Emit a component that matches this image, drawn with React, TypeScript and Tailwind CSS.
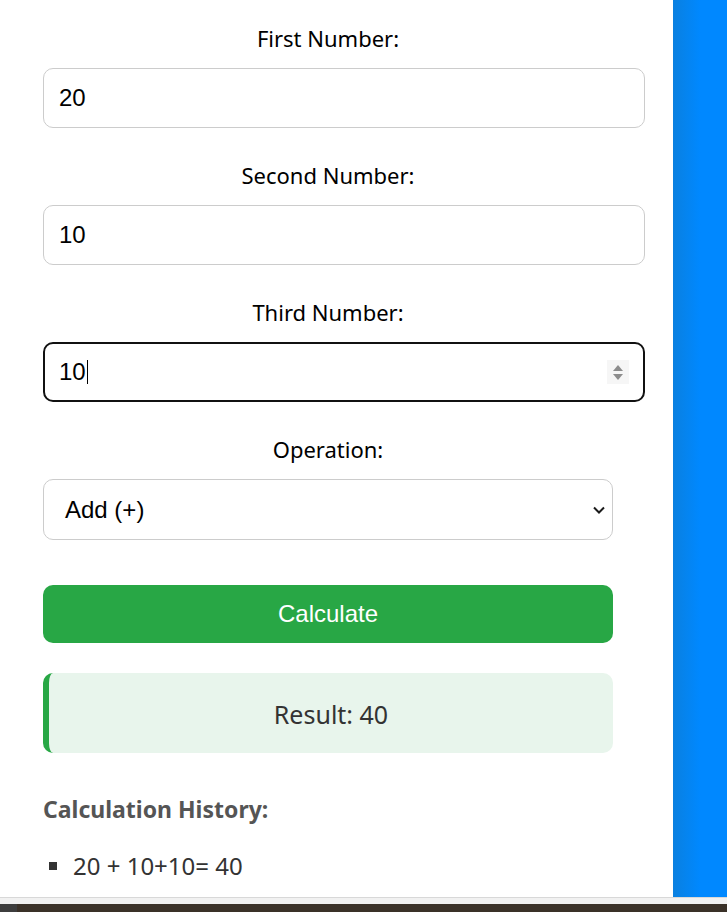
import React from "react";

const labelCls =
  "block text-center text-[22px] leading-[26px] h-[30px] mb-[13px] text-black [font-family:'Noto_Sans',sans-serif]";
const inputCls =
  "w-[602px] h-[60px] border border-[#cccccc] rounded-[10px] pl-[15px] flex items-center text-[24px] text-black [font-family:'Liberation_Sans',Arial,sans-serif] bg-white";

export default function App() {
  return (
    <div className="w-[727px] h-[912px] flex flex-col overflow-hidden bg-white">
      <div className="flex h-[897px]">
        <div className="w-[673px] bg-white">
          <div className="ml-[43px] w-[570px] pt-[25px]">
            <div className={labelCls}>First Number:</div>
            <div className={inputCls + " mb-[34px]"}>20</div>

            <div className={labelCls}>Second Number:</div>
            <div className={inputCls + " mb-[34px]"}>10</div>

            <div className={labelCls}>Third Number:</div>
            <div className="w-[602px] h-[60px] border-2 border-[#111111] rounded-[10px] pl-[14px] pr-[14px] flex items-center justify-between text-[24px] text-black [font-family:'Liberation_Sans',Arial,sans-serif] bg-white mb-[34px]">
              <div className="flex items-center">
                <span>10</span>
                <span className="w-px h-[24px] bg-black ml-[1px]" />
              </div>
              <div className="w-[22px] h-[24px] bg-[#f6f6f6] flex flex-col items-center justify-center gap-[3px]">
                <svg width="10" height="6" viewBox="0 0 10 6">
                  <polygon points="5,0 10,6 0,6" fill="#8d8d8d" />
                </svg>
                <svg width="10" height="6" viewBox="0 0 10 6">
                  <polygon points="0,0 10,0 5,6" fill="#8d8d8d" />
                </svg>
              </div>
            </div>

            <div className={labelCls}>Operation:</div>
            <div className="w-[570px] h-[61px] border border-[#cccccc] rounded-[10px] pl-[21px] pr-[6px] flex items-center justify-between text-[24px] text-black [font-family:'Liberation_Sans',Arial,sans-serif] bg-white mb-[45px]">
              <span>Add (+)</span>
              <svg width="14" height="10" viewBox="0 0 14 10">
                <polyline
                  points="2,2.5 7,7.5 12,2.5"
                  fill="none"
                  stroke="#1a1a1a"
                  strokeWidth="2"
                />
              </svg>
            </div>

            <div className="w-[570px] h-[58px] rounded-[10px] bg-[#28a745] text-white flex items-center justify-center text-[24px] [font-family:'Liberation_Sans',Arial,sans-serif] mb-[30px]">
              Calculate
            </div>

            <div className="w-[570px] h-[80px] rounded-[10px] bg-[#e8f5ec] border-l-[6px] border-[#28a745] flex items-center justify-center text-[25px] text-[#333333] [font-family:'Noto_Sans',sans-serif] pt-[3px]">
              Result: 40
            </div>

            <div className="mt-[41px] text-[23px] leading-[30px] font-bold text-[#555555] [font-family:'Noto_Sans',sans-serif]">
              Calculation History:
            </div>

            <div className="mt-[27px] flex items-center h-[30px] text-[24px] text-[#333333] [font-family:'Noto_Sans',sans-serif]">
              <span className="w-[8px] h-[8px] bg-[#333333] ml-[6px] mr-[16px]" />
              <span>20 + 10+10= 40</span>
            </div>
          </div>
        </div>
        <div className="flex-1 bg-gradient-to-r from-[#0a80e0] via-[#0088ff] to-[#0088ff]" />
      </div>
      <div className="h-[1px] bg-[#d8d8d8]" />
      <div className="h-[6px] bg-[#f1f1f1]" />
      <div className="flex-1 flex bg-[#3a3128]">
        <div className="w-[17px] bg-[#3d3d3d]" />
      </div>
    </div>
  );
}
